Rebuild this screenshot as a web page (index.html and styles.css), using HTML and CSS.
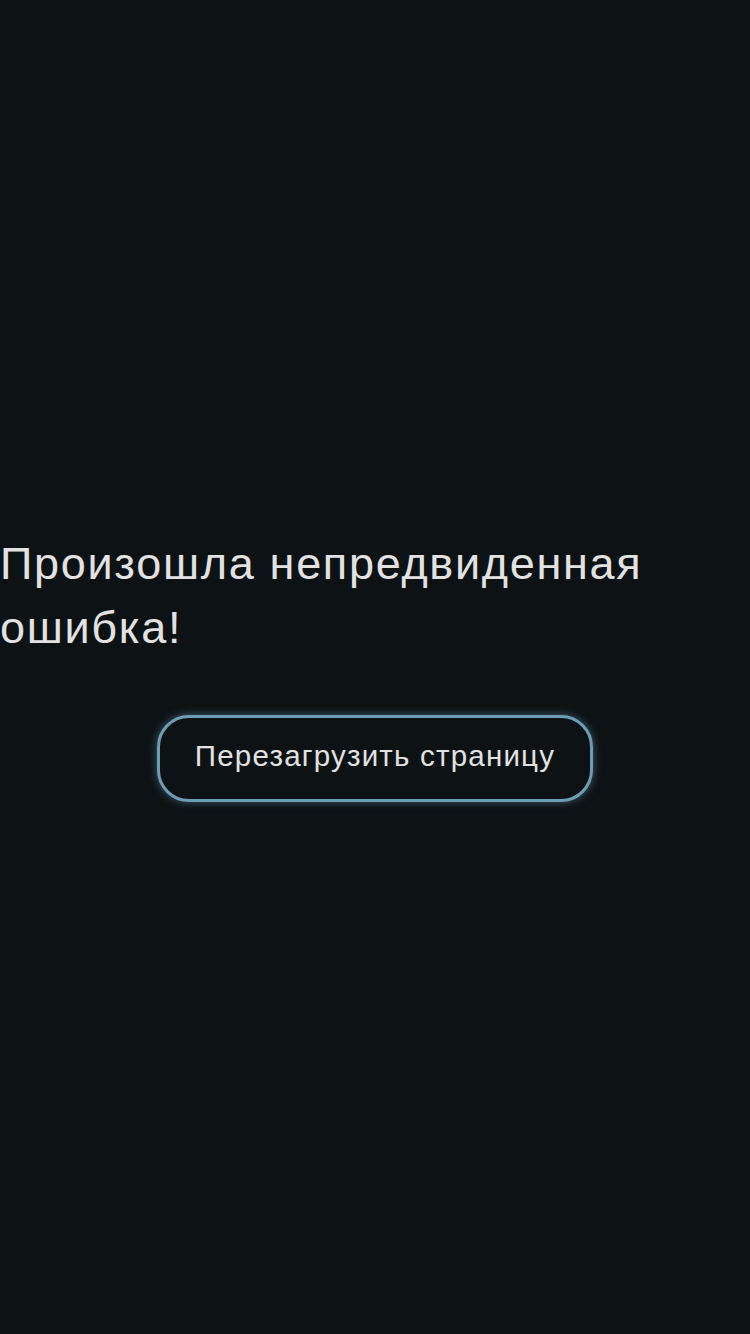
FILE: index.html
```html
<!DOCTYPE html>
<html lang="ru">
<head>
<meta charset="utf-8">
<link rel="stylesheet" href="styles.css">
</head>
<body>
<main class="error">
  <h1 class="error-title">Произошла непредвиденная ошибка!</h1>
  <button class="reload-btn" type="button">Перезагрузить страницу</button>
</main>
</body>
</html>
```
FILE: styles.css
```css
html, body {
  margin: 0;
  padding: 0;
  background: #0d1215;
  height: 100%;
}
body {
  font-family: "Liberation Sans", Arial, sans-serif;
  color: #e2e2e2;
}
.error {
  min-height: 100vh;
  display: flex;
  flex-direction: column;
  justify-content: center;
  align-items: stretch;
}
.error-title {
  margin: 0;
  font-size: 45px;
  font-weight: 400;
  letter-spacing: 1.7px;
  line-height: 64px;
  color: #e2e2e2;
}
.reload-btn {
  align-self: center;
  margin-top: 55px;
  width: 436px;
  height: 87px;
  padding: 0 0 6px;
  background: #0d1215;
  border: 3px solid #6c9db2;
  border-radius: 32px;
  box-shadow: 0 0 8px rgba(108, 157, 178, 0.55);
  color: #e2e2e2;
  font-family: "Liberation Sans", Arial, sans-serif;
  font-size: 29.5px;
  letter-spacing: 1.2px;
}
```
